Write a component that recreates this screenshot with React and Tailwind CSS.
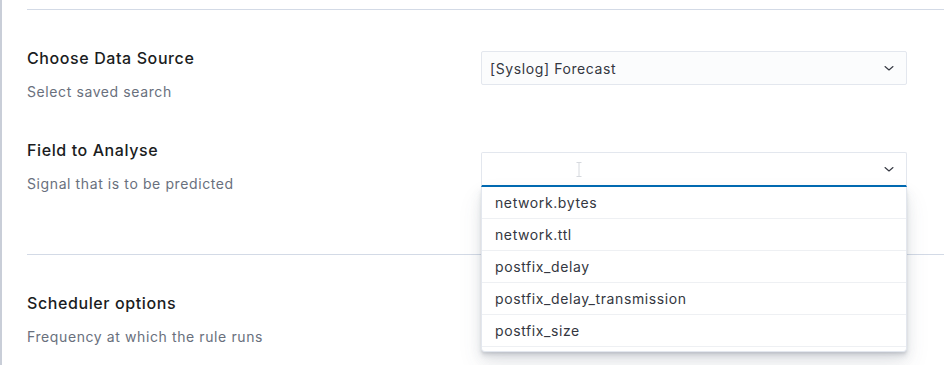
import React from 'react';

const fields = [
    'network.bytes',
    'network.ttl',
    'postfix_delay',
    'postfix_delay_transmission',
    'postfix_size'
];

function Chevron() {
    return (
        <svg width="12" height="12" viewBox="0 0 12 12" className="shrink-0">
            <path
                d="M2 4.5 L6 8 L10 4.5"
                fill="none"
                stroke="#343741"
                strokeWidth="1.1"
                strokeLinecap="round"
                strokeLinejoin="round"
            />
        </svg>
    );
}

function FieldLabel({ title, desc }) {
    return (
        <div className="w-[454px] shrink-0">
            <div className="text-[16px] leading-[24px] font-[550] tracking-[0.6px] text-[#1a1c21]">
                {title}
            </div>
            <div className="mt-[12px] text-[14px] leading-[20px] tracking-[0.6px] text-[#69707d]">
                {desc}
            </div>
        </div>
    );
}

export default function App() {
    return (
        <div
            className="w-[944px] h-[365px] overflow-hidden bg-white border-l-[2px] border-[#c9ced8] pl-[25px]"
            style={{ fontFamily: 'Inter, "Noto Sans", sans-serif' }}
        >
            <div className="mt-[9px] h-px bg-[#d3dae6]" />

            {/* data source */}
            <div className="flex items-start pt-[36px]">
                <FieldLabel
                    title="Choose Data Source"
                    desc="Select saved search"
                />
                <div className="mt-[5px] w-[426px] h-[34px] flex items-center justify-between pl-[8px] pr-[11px] bg-[#fbfcfd] border border-[#e3e7ee] rounded-[2px]">
                    <span className="text-[14px] tracking-[0.6px] text-[#343741]">
                        [Syslog] Forecast
                    </span>
                    <Chevron />
                </div>
            </div>

            {/* field */}
            <div className="flex items-start pt-[36px]">
                <FieldLabel
                    title="Field to Analyse"
                    desc="Signal that is to be predicted"
                />
                <div className="relative mt-[14px] w-[426px]">
                    <div className="h-[35px] flex items-center justify-between pl-[9px] pr-[11px] bg-white border border-[#e3e7ee] border-b-[2px] border-b-[#006bb4] rounded-t-[2px]">
                        <svg
                            width="6"
                            height="15"
                            viewBox="0 0 6 15"
                            className="ml-[85px]"
                        >
                            <path
                                d="M0.5 0.5 H5.5 M3 0.5 V14.5 M0.5 14.5 H5.5"
                                stroke="#d6d9de"
                                strokeWidth="1"
                                fill="none"
                            />
                        </svg>
                        <Chevron />
                    </div>
                    <div className="absolute left-0 top-full w-[426px] h-[165px] overflow-hidden bg-white border border-t-0 border-[#e3e7ee] rounded-b-[4px] shadow-[0_12px_24px_0_rgba(65,78,101,0.1),0_6px_12px_0_rgba(65,78,101,0.1),0_4px_4px_0_rgba(65,78,101,0.1),0_2px_2px_0_rgba(65,78,101,0.1)] z-10">
                        {fields.map((f) => (
                            <div
                                key={f}
                                className="h-[32px] flex items-center pl-[13px] border-b border-[#eef0f3] text-[14px] tracking-[0.6px] text-[#343741]"
                            >
                                {f}
                            </div>
                        ))}
                    </div>
                </div>
            </div>

            <div className="mt-[60px] h-px bg-[#d3dae6]" />

            {/* scheduler */}
            <div className="flex items-start pt-[36px]">
                <FieldLabel
                    title="Scheduler options"
                    desc="Frequency at which the rule runs"
                />
            </div>
        </div>
    );
}
